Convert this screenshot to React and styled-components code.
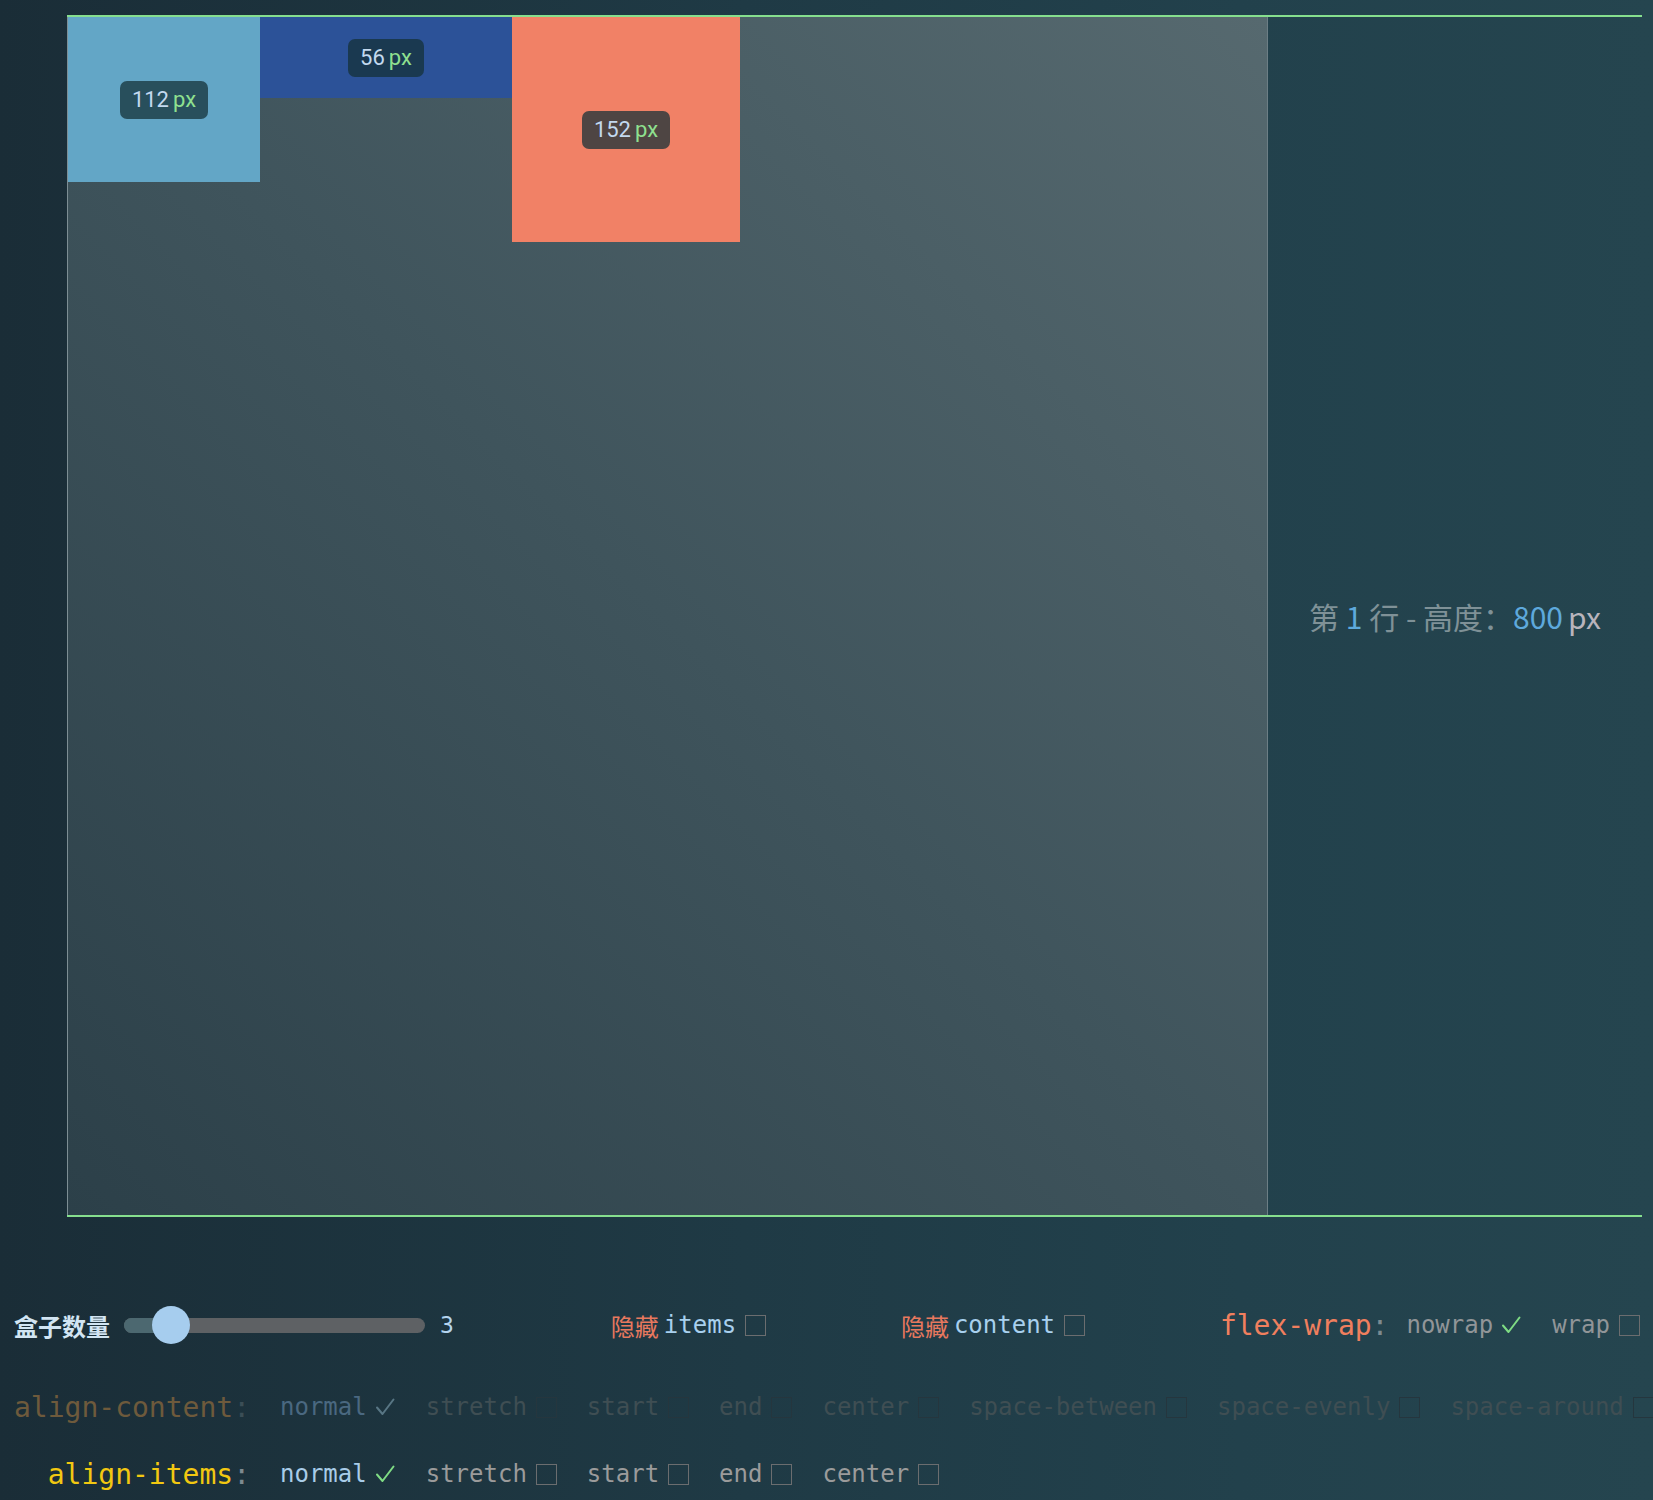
import React from "react";
import styled, { createGlobalStyle } from "styled-components";

const GlobalStyle = createGlobalStyle`
  body {
    margin: 0;
    background: linear-gradient(90deg, #1a2d37 0%, #1f3a45 45%, #22414c 75%, #25454f 100%);
    font-family: "DejaVu Sans Mono", "Liberation Mono", monospace;
  }
`;

const Page = styled.div`
  min-height: 1500px;
  padding-top: 15px;
  box-sizing: border-box;
  overflow: hidden;
`;

const Stage = styled.div`
  display: flex;
  margin-left: 67px;
  width: 1575px;
  border-top: 2px solid #86df8e;
  border-bottom: 2px solid #86df8e;
`;

const FlexLine = styled.div`
  display: flex;
  align-items: flex-start;
  width: 1201px;
  height: 1198px;
  box-sizing: border-box;
  border-left: 1px solid #7d8e94;
  border-right: 1px solid #6c7e85;
  background: linear-gradient(to top right, #2c4049 0%, #3f545c 50%, #56696f 100%);
`;

const Box = styled.div`
  display: flex;
  align-items: center;
  justify-content: center;
  flex-shrink: 0;
  width: ${(p) => p.$w}px;
  height: ${(p) => p.$h}px;
  background: ${(p) => p.$color};
`;

const Badge = styled.div`
  display: flex;
  align-items: center;
  height: 38px;
  padding: 0 12px;
  border-radius: 7px;
  background: rgba(20, 48, 55, 0.74);
  font-family: Roboto, "Noto Sans", sans-serif;
  font-size: 22px;
  color: #c3d9ef;
`;

const BadgeUnit = styled.span`
  margin-left: 4px;
  color: #8fe08f;
`;

const LineInfo = styled.div`
  flex: 1;
  display: flex;
  align-items: center;
  justify-content: center;
  font-family: "Noto Sans CJK SC", "Noto Sans", sans-serif;
  font-size: 30px;
  color: #7f9197;
  white-space: pre;
`;

const InfoNum = styled.span`
  color: #5ea9dc;
`;

const InfoUnit = styled.span`
  margin-left: 5px;
  color: #b9b4bc;
`;

const Controls = styled.div`
  padding: 88px 13px 0 14px;
`;

const TopRow = styled.div`
  display: flex;
  align-items: center;
  justify-content: space-between;
  height: 40px;
`;

const SliderGroup = styled.div`
  display: flex;
  align-items: center;
  width: 462px;
`;

const SliderLabel = styled.span`
  font-family: "Noto Sans CJK SC", sans-serif;
  font-size: 24px;
  font-weight: 700;
  color: #d2e5f3;
  margin-right: 14px;
`;

const Track = styled.div`
  position: relative;
  width: 301px;
  height: 15px;
  border-radius: 8px;
  background: #5e6164;
`;

const TrackFill = styled.div`
  height: 100%;
  border-radius: 8px 0 0 8px;
  background: #4c6870;
`;

const Thumb = styled.div`
  position: absolute;
  top: 50%;
  width: 38px;
  height: 38px;
  margin-left: -19px;
  transform: translateY(-50%);
  border-radius: 50%;
  background: #a6cdee;
`;

const SliderValue = styled.span`
  margin-left: 15px;
  font-size: 23px;
  color: #b4d4ee;
`;

const Toggle = styled.div`
  display: flex;
  align-items: center;
  font-size: 24px;
`;

const ToggleCn = styled.span`
  font-family: "Noto Sans CJK SC", sans-serif;
  color: #e8785e;
  margin-right: 5px;
`;

const ToggleKey = styled.span`
  color: #a8d0ee;
`;

const Checkbox = styled.span`
  display: inline-block;
  width: 19px;
  height: 19px;
  margin-left: 9px;
  border: 1.5px solid ${(p) => (p.$dim ? "#25363e" : "#6b6d6f")};
`;

const OptionsRow = styled.div`
  display: flex;
  align-items: center;
  height: 40px;
  gap: 30px;
  margin-top: ${(p) => p.$top}px;
  white-space: nowrap;
`;

const PropName = styled.span`
  flex-shrink: 0;
  width: ${(p) => (p.$w ? `${p.$w}px` : "auto")};
  text-align: right;
  font-size: 28px;
  color: ${(p) => p.$color};
  margin-right: ${(p) => p.$gap || 0}px;
`;

const Colon = styled.span`
  color: ${(p) => (p.$dim ? "#3b4e56" : "#7d8a90")};
`;

const Option = styled.span`
  display: flex;
  align-items: center;
  font-size: 24px;
  color: ${(p) => p.$color};
`;

const Check = ({ color }) => (
  <svg width="22" height="22" viewBox="0 0 22 22" style={{ marginLeft: 7 }}>
    <path d="M3 11.5 L8.5 18 L19.5 3.5" fill="none" stroke={color} strokeWidth="2" strokeLinecap="round" strokeLinejoin="round" />
  </svg>
);

const boxes = [
  { h: 112, w: 192, ph: 165, color: "#63a6c6" },
  { h: 56, w: 252, ph: 81, color: "#2c5298" },
  { h: 152, w: 228, ph: 225, color: "#f18166" },
];

const contentOpts = ["stretch", "start", "end", "center", "space-between", "space-evenly", "space-around"];
const itemOpts = ["stretch", "start", "end", "center"];

function OptionList({ options, dim }) {
  return options.map((o) => (
    <Option key={o} $color={dim ? "#3f4e53" : "#9b9b9b"}>
      {o}
      <Checkbox $dim={dim} />
    </Option>
  ));
}

export default function App() {
  const count = 3;
  const thumbPos = 47;
  return (
    <Page>
      <GlobalStyle />
      <Stage>
        <FlexLine>
          {boxes.map((b) => (
            <Box key={b.h} $w={b.w} $h={b.ph} $color={b.color}>
              <Badge>
                {b.h}
                <BadgeUnit>px</BadgeUnit>
              </Badge>
            </Box>
          ))}
        </FlexLine>
        <LineInfo>
          第 <InfoNum>1</InfoNum> 行 - 高度：<InfoNum>800</InfoNum>
          <InfoUnit>px</InfoUnit>
        </LineInfo>
      </Stage>

      <Controls>
        <TopRow>
          <SliderGroup>
            <SliderLabel>盒子数量</SliderLabel>
            <Track>
              <TrackFill style={{ width: thumbPos }} />
              <Thumb style={{ left: thumbPos }} />
            </Track>
            <SliderValue>{count}</SliderValue>
          </SliderGroup>
          <Toggle>
            <ToggleCn>隐藏</ToggleCn>
            <ToggleKey>items</ToggleKey>
            <Checkbox />
          </Toggle>
          <Toggle>
            <ToggleCn>隐藏</ToggleCn>
            <ToggleKey>content</ToggleKey>
            <Checkbox />
          </Toggle>
          <OptionsRow $top={0}>
            <PropName $color="#f07f5e" $gap={-12}>
              flex-wrap<Colon>:</Colon>
            </PropName>
            <Option $color="#919598">
              nowrap
              <Check color="#7fdc84" />
            </Option>
            <Option $color="#919598">
              wrap
              <Checkbox />
            </Option>
          </OptionsRow>
        </TopRow>

        <OptionsRow $top={42}>
          <PropName $w={236} $color="#6e5a3c">
            align-content<Colon $dim>:</Colon>
          </PropName>
          <Option $color="#4a6880">
            normal
            <Check color="#587684" />
          </Option>
          <OptionList options={contentOpts} dim />
        </OptionsRow>

        <OptionsRow $top={27}>
          <PropName $w={236} $color="#f2c811">
            align-items<Colon>:</Colon>
          </PropName>
          <Option $color="#a8cce8">
            normal
            <Check color="#7fdc84" />
          </Option>
          <OptionList options={itemOpts} />
        </OptionsRow>
      </Controls>
    </Page>
  );
}
